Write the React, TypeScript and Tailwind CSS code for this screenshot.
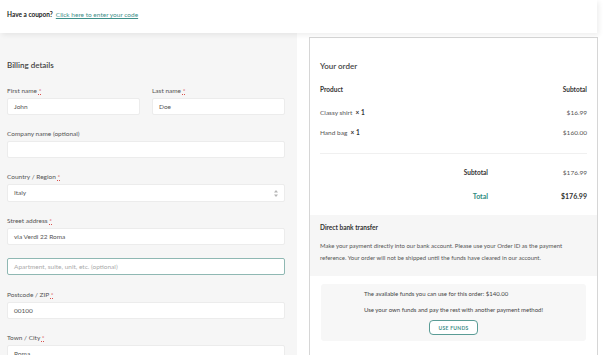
import React from 'react';

const Req = () => <span className="text-[#d9534f] underline decoration-dotted">*</span>;

const Field = ({ label, value, required = false, placeholder = '' }: { label?: string; value?: string; required?: boolean; placeholder?: string }) => (
    <div className="flex flex-col">
        {label && (
            <label className="block h-[10px] text-[6.5px] leading-[10px] text-[#555] mb-[2px]">
                {label} {required && <Req />}
            </label>
        )}
        <div className="h-[17px] bg-white border border-[#ececec] rounded-[2px] px-[6px] flex items-center text-[6.5px] text-[#555]">
            {value || <span className="text-[#aaa]">{placeholder}</span>}
        </div>
    </div>
);

const App = () => {
    return (
        <div className="w-[607px] h-[355px] overflow-hidden bg-white text-[#333]" style={{ fontFamily: 'Lato, "Open Sans", sans-serif' }}>
            {/* Coupon bar */}
            <div className="relative z-10 w-[597px] h-[33px] bg-white shadow-[2px_2px_5px_rgba(0,0,0,0.07)] flex items-center px-[7px] pb-[3px] text-[6.5px]">
                <span className="font-bold text-[#222]">Have a coupon?</span>
                <a className="ml-[3px] text-[#3f8f8a] underline">Click here to enter your code</a>
            </div>

            <div className="flex">
                {/* Billing details */}
                <div className="w-[297px] h-[322px] bg-[#f6f6f6] pl-[7px] pr-[12px] pt-[26px]">
                    <h3 className="text-[8px] leading-[12px] font-semibold text-[#444] mb-[15px]">Billing details</h3>

                    <div className="grid grid-cols-2 gap-x-[12px] mb-[14px]">
                        <Field label="First name" required value="John" />
                        <Field label="Last name" required value="Doe" />
                    </div>

                    <div className="mb-[14px]">
                        <Field label="Company name (optional)" value="" />
                    </div>

                    <div className="mb-[14px] flex flex-col">
                        <label className="block h-[10px] text-[6.5px] leading-[10px] text-[#555] mb-[2px]">
                            Country / Region <Req />
                        </label>
                        <div className="h-[18px] bg-white border border-[#ececec] rounded-[2px] px-[6px] flex items-center justify-between text-[6.5px] text-[#555]">
                            <span>Italy</span>
                            <svg width="4" height="7" viewBox="0 0 4 7" fill="#b5b5b5">
                                <path d="M2 0 L4 2.5 H0 Z" />
                                <path d="M2 7 L4 4.5 H0 Z" />
                            </svg>
                        </div>
                    </div>

                    <div className="mb-[13px]">
                        <Field label="Street address" required value="via Verdi 22 Roma" />
                    </div>

                    <div className="mb-[15px]">
                        <div className="h-[17px] bg-white border border-[#8fb8b3] rounded-[2px] px-[6px] flex items-center text-[6.5px] text-[#aaa]">
                            Apartment, suite, unit, etc. (optional)
                        </div>
                    </div>

                    <div className="mb-[14px]">
                        <Field label="Postcode / ZIP" required value="00100" />
                    </div>

                    <Field label="Town / City" required value="Roma" />
                </div>

                {/* Order review */}
                <div className="ml-[12px] mt-[4px] w-[289px] h-[330px] border border-[#d6d6d6] flex flex-col">
                    <div className="px-[10px] pt-[22px]">
                        <h3 className="text-[8px] leading-[12px] font-semibold text-[#444] mb-[13px]">Your order</h3>
                        <div className="flex justify-between text-[6.5px] font-bold text-[#333] leading-[10px] mb-[13px]">
                            <span>Product</span>
                            <span>Subtotal</span>
                        </div>
                        <div className="flex justify-between text-[6.5px] text-[#555] leading-[10px] mb-[10px]">
                            <span>Classy shirt&nbsp; <b className="text-[#333]">× 1</b></span>
                            <span>$16.99</span>
                        </div>
                        <div className="flex justify-between text-[6.5px] text-[#555] leading-[10px] pb-[15px] border-b border-[#f0f0f0]">
                            <span>Hand bag&nbsp; <b className="text-[#333]">× 1</b></span>
                            <span>$160.00</span>
                        </div>
                        <div className="grid grid-cols-[168px_1fr] text-[6.5px] leading-[10px] pt-[14px] gap-y-[13px] pb-[14px]">
                            <span className="text-right font-bold text-[#333]">Subtotal</span>
                            <span className="text-right text-[#555]">$176.99</span>
                            <span className="text-right font-bold text-[7px] text-[#2e8b80]">Total</span>
                            <span className="text-right font-bold text-[7px] text-[#333]">$176.99</span>
                        </div>
                    </div>

                    <div className="bg-[#f6f6f6] px-[10px] pt-[8px] pb-[12px]">
                        <div className="text-[6.5px] font-bold text-[#333] leading-[10px] mb-[7px]">Direct bank transfer</div>
                        <p className="text-[6px] text-[#555] leading-[12px]">
                            Make your payment directly into our bank account. Please use your Order ID as the payment reference. Your order will not be shipped until the funds have cleared in our account.
                        </p>
                    </div>

                    <div className="px-[11px] pt-[8px]">
                        <div className="bg-[#f7f7f7] rounded-[3px] h-[57px] flex justify-center pt-[5px]">
                            <div className="flex flex-col text-[6px] text-[#444] leading-[10px]">
                                <span className="mb-[6px]">The available funds you can use for this order: $140.00</span>
                                <span className="mb-[5px]">Use your own funds and pay the rest with another payment method!</span>
                                <div className="flex justify-center">
                                    <button className="h-[15px] px-[8px] border border-[#5a9c96] rounded-[4px] text-[5px] font-bold tracking-[0.3px] text-[#3f8f8a] bg-white">
                                        USE FUNDS
                                    </button>
                                </div>
                            </div>
                        </div>
                    </div>
                </div>
            </div>
        </div>
    );
};

export default App;
